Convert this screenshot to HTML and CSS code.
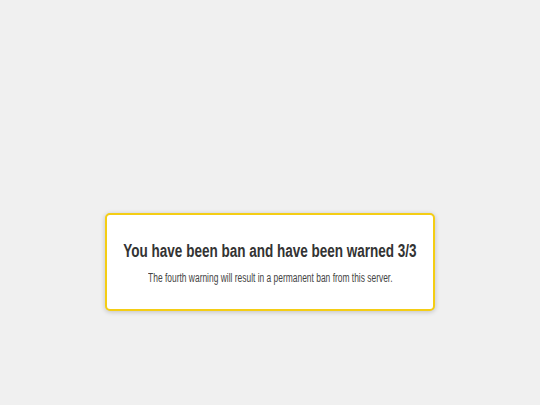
FILE: index.html
```html
<!DOCTYPE html>
<html>
<head>
<meta charset="utf-8">
<link rel="stylesheet" href="styles.css">
</head>
<body>
<main class="page">
  <section class="card">
    <h1 class="title"><span class="squeeze-title">You have been ban and have been warned 3/3</span></h1>
    <p class="note"><span class="squeeze-note">The fourth warning will result in a permanent ban from this server.</span></p>
  </section>
</main>
</body>
</html>
```
FILE: styles.css
```css
html, body {
  margin: 0;
  padding: 0;
  background: #f0f0f0;
}
.page {
  width: 540px;
  height: 405px;
  box-sizing: border-box;
  padding-top: 213px;
  font-family: "Liberation Sans", Arial, sans-serif;
}
.card {
  width: 330px;
  height: 98px;
  box-sizing: border-box;
  margin: 0 auto;
  background: #ffffff;
  border: 2px solid #f4cd14;
  border-radius: 5px;
  box-shadow: 0 1px 5px rgba(0, 0, 0, 0.2);
  display: flex;
  flex-direction: column;
  align-items: center;
  padding-top: 26px;
}
.title {
  margin: 0;
  font-size: 17.5px;
  font-weight: bold;
  color: #333333;
  line-height: 20px;
  white-space: nowrap;
}
.note {
  margin: 10px 0 0;
  font-size: 12.5px;
  color: #444444;
  line-height: 15px;
  white-space: nowrap;
}
.squeeze-title {
  display: inline-block;
  transform: scaleX(0.772);
}
.squeeze-note {
  display: inline-block;
  transform: scaleX(0.674);
}
```
